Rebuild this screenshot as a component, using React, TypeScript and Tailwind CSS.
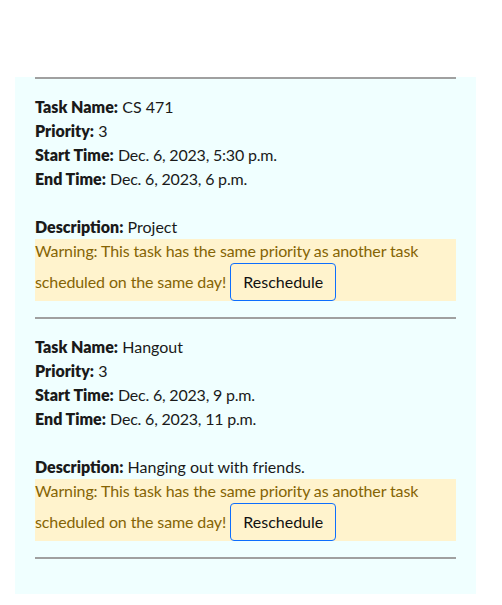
import React from "react";

const tasks = [
  { name: "CS 471", priority: "3", start: "Dec. 6, 2023, 5:30 p.m.", end: "Dec. 6, 2023, 6 p.m.", desc: "Project" },
  { name: "Hangout", priority: "3", start: "Dec. 6, 2023, 9 p.m.", end: "Dec. 6, 2023, 11 p.m.", desc: "Hanging out with friends." },
];

function Hr() {
  return <div className="h-[2px] bg-[#a0a0a0]" />;
}

function L({ children }: { children: React.ReactNode }) {
  return <span className="font-extrabold">{children}</span>;
}

export default function App() {
  return (
    <div className="bg-white min-h-[605px] pt-[77px] text-[16px] leading-[24px] text-[#1a1a1a]" style={{ fontFamily: "Lato, 'Liberation Sans', sans-serif" }}>
      <div className="ml-[15px] w-[461px] bg-[#f0ffff] px-5 pb-[35px]">
        <Hr />
        {tasks.map((t) => (
          <div key={t.name}>
            <div className="pt-[16px]">
              <div><L>Task Name:</L> {t.name}</div>
              <div><L>Priority:</L> {t.priority}</div>
              <div><L>Start Time:</L> <span className="tracking-[-0.2px]">{t.start}</span></div>
              <div><L>End Time:</L> <span className="tracking-[-0.2px]">{t.end}</span></div>
              <div className="h-6" />
              <div><L>Description:</L> {t.desc}</div>
              <div className="bg-[#fff3cd] text-[#856404] leading-6">
                <span className="tracking-[-0.12px]">Warning: This task has the same priority as another task scheduled on the same day!</span>{" "}
                <button className="px-3 py-1.5 leading-6 rounded-[4px] border border-[#0d6efd] text-[#111]">Reschedule</button>
              </div>
            </div>
            <div className="mt-4"><Hr /></div>
          </div>
        ))}
      </div>
    </div>
  );
}
